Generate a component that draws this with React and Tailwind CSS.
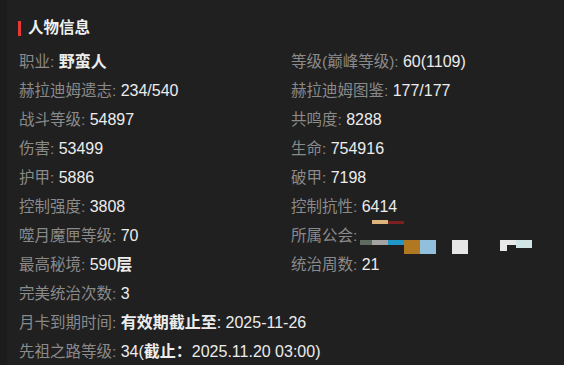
const FONT = '"Liberation Sans", "Noto Sans CJK SC", sans-serif';

const rows = [
  [
    { label: "职业", value: [{ t: "野蛮人", b: true }] },
    { label: "等级(巅峰等级)", value: [{ t: "60(1109)" }] },
  ],
  [
    { label: "赫拉迪姆遗志", value: [{ t: "234/540" }] },
    { label: "赫拉迪姆图鉴", value: [{ t: "177/177" }] },
  ],
  [
    { label: "战斗等级", value: [{ t: "54897" }] },
    { label: "共鸣度", value: [{ t: "8288" }] },
  ],
  [
    { label: "伤害", value: [{ t: "53499" }] },
    { label: "生命", value: [{ t: "754916" }] },
  ],
  [
    { label: "护甲", value: [{ t: "5886" }] },
    { label: "破甲", value: [{ t: "7198" }] },
  ],
  [
    { label: "控制强度", value: [{ t: "3808" }] },
    { label: "控制抗性", value: [{ t: "6414" }] },
  ],
  [
    { label: "噬月魔匣等级", value: [{ t: "70" }] },
    { label: "所属公会", guild: true },
  ],
  [
    { label: "最高秘境", value: [{ t: "590" }, { t: "层", b: true }] },
    { label: "统治周数", value: [{ t: "21" }] },
  ],
  [{ label: "完美统治次数", value: [{ t: "3" }] }, null],
];

const wideRows = [
  {
    label: "月卡到期时间",
    value: [{ t: "有效期截止至", b: true }, { t: ": 2025-11-26" }],
  },
  {
    label: "先祖之路等级",
    value: [{ t: "34(" }, { t: "截止：", b: true }, { t: "2025.11.20 03:00)" }],
  },
];

function GuildBadge() {
  // pixelated guild emblem
  return (
    <svg
      width="172"
      height="36"
      viewBox="0 0 172 36"
      className="absolute left-[69px] top-[-2px]"
      shapeRendering="crispEdges"
    >
      <rect x="12" y="1" width="16" height="4" fill="#dcb47c" />
      <rect x="28" y="2" width="16" height="3" fill="#7b1f1f" />
      <rect x="0" y="21" width="12" height="5" fill="#5f6b5f" />
      <rect x="12" y="21" width="16" height="5" fill="#a3a3a3" />
      <rect x="28" y="21" width="16" height="5" fill="#2196c8" />
      <rect x="44" y="21" width="16" height="14" fill="#b07820" />
      <rect x="60" y="21" width="16" height="14" fill="#90c0dc" />
      <rect x="92" y="21" width="16" height="14" fill="#e6e6e6" />
      <rect x="140" y="21" width="16" height="5" fill="#e8e8e8" />
      <rect x="140" y="21" width="7" height="11" fill="#e8e8e8" />
      <rect x="156" y="21" width="16" height="8" fill="#d0e4e4" />
    </svg>
  );
}

function Field({ item }) {
  if (!item) return <div />;
  return (
    <div className="relative flex h-[29px] items-center whitespace-pre">
      <span className="text-[15.5px] text-[#8a8a8a]">{item.label}: </span>
      {item.guild ? (
        <GuildBadge />
      ) : (
        <span className="text-[16px] text-[#ececec]">
          {item.value.map((v, i) => (
            <span key={i} className={v.b ? "font-bold" : ""}>
              {v.t}
            </span>
          ))}
        </span>
      )}
    </div>
  );
}

export default function App() {
  return (
    <div
      className="flex h-[365px] w-[564px] overflow-hidden bg-[#1c1c1c] text-[15.5px]"
      style={{ fontFamily: FONT }}
    >
      <div className="ml-[7px] flex-1 bg-[#202020] pl-[12px] pt-[18px]">
        <div className="flex h-5 items-center">
          <div className="-ml-px h-[15px] w-[3px] bg-[#e53935]" />
          <span className="ml-[7px] text-[15.5px] font-bold text-[#f0f0f0]">人物信息</span>
        </div>
        <div className="mt-[9px] grid grid-cols-[272px_1fr]">
          {rows.map((pair, i) => (
            <div key={i} className="contents">
              <Field item={pair[0]} />
              <Field item={pair[1]} />
            </div>
          ))}
          {wideRows.map((item, i) => (
            <div key={i} className="col-span-2">
              <Field item={item} />
            </div>
          ))}
        </div>
      </div>
    </div>
  );
}
